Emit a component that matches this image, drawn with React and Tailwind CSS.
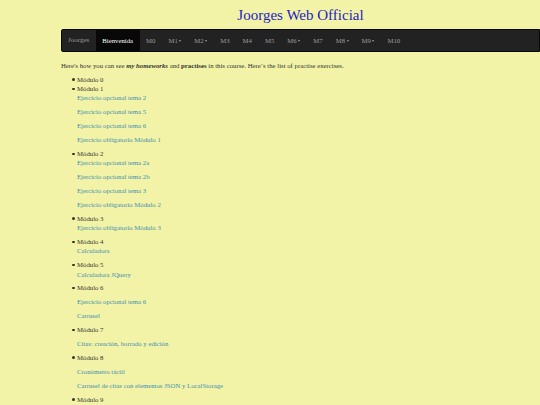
const NAV = [
  { label: 'M0' },
  { label: 'M1', drop: true },
  { label: 'M2', drop: true },
  { label: 'M3' },
  { label: 'M4' },
  { label: 'M5' },
  { label: 'M6', drop: true },
  { label: 'M7' },
  { label: 'M8', drop: true },
  { label: 'M9', drop: true },
  { label: 'M10' },
]

const MODULES = [
  { name: 'Módulo 0', links: [] },
  { name: 'Módulo 1', links: ['Ejercicio opcional tema 2', 'Ejercicio opcional tema 5', 'Ejercicio opcional tema 6', 'Ejercicio obligatorio Módulo 1'] },
  { name: 'Módulo 2', links: ['Ejercicio opcional tema 2a', 'Ejercicio opcional tema 2b', 'Ejercicio opcional tema 3', 'Ejercicio obligatorio Módulo 2'] },
  { name: 'Módulo 3', links: ['Ejercicio obligatorio Módulo 3'] },
  { name: 'Módulo 4', links: ['Calculadora'] },
  { name: 'Módulo 5', links: ['Calculadora JQuery'] },
  { name: 'Módulo 6', gap: true, links: ['Ejercicio opcional tema 6', 'Carrusel'] },
  { name: 'Módulo 7', gap: true, links: ['Citas: creación, borrado y edición'] },
  { name: 'Módulo 8', gap: true, links: ['Cronómetro táctil', 'Carrusel de citas con elementos JSON y LocalStorage'] },
  { name: 'Módulo 9', links: [] },
]

export default function App() {
  return (
    <div className="min-h-screen bg-[#f2f3a6] text-[#333] text-[6.75px] leading-[9.3px] font-['Liberation_Serif',serif]">
      <div className="ml-[61px]">
        {/* header */}
        <h1 className="pt-[7px] pb-[5px] text-center text-[15px] leading-[17px] text-[#2323c4]">Joorges Web Official</h1>

        {/* navbar */}
        <nav className="flex h-[23px] items-stretch bg-[#222] border border-[#080808] rounded-l-[2px] text-[#9d9d9d] mb-[9px]">
          <a className="flex items-center pl-[6px] pr-[6.5px] text-[7px]">Joorges</a>
          <a className="flex items-center px-[6.5px] bg-[#080808] text-white">Bienvenida</a>
          {NAV.map(n => (
            <a key={n.label} className="flex items-center px-[6.5px]">
              {n.label}
              {n.drop && <span className="ml-[1.5px] inline-block w-0 h-0 border-x-[1.5px] border-t-[2px] border-x-transparent border-t-[#9d9d9d]" />}
            </a>
          ))}
        </nav>

        <p className="mb-[4.6px]">
          Here's how you can see <b><i>my homeworks</i></b> and <b>practises</b> in this course. Here´s the list of practise exercises.
        </p>

        <ul className="pl-[16px]">
          {MODULES.map(m => (
            <li key={m.name} className="relative">
              <span className="absolute left-[-5px] top-[3.5px] w-[2.5px] h-[2.5px] rounded-full bg-[#333]" />
              {m.name}
              {m.links.map((l, i) => (
                <p key={l} className={`mb-[4.6px] ${m.gap && i === 0 ? 'mt-[4.6px]' : ''}`}>
                  <a className="text-[#3d8fb3]">{l}</a>
                </p>
              ))}
            </li>
          ))}
        </ul>
      </div>
    </div>
  )
}
